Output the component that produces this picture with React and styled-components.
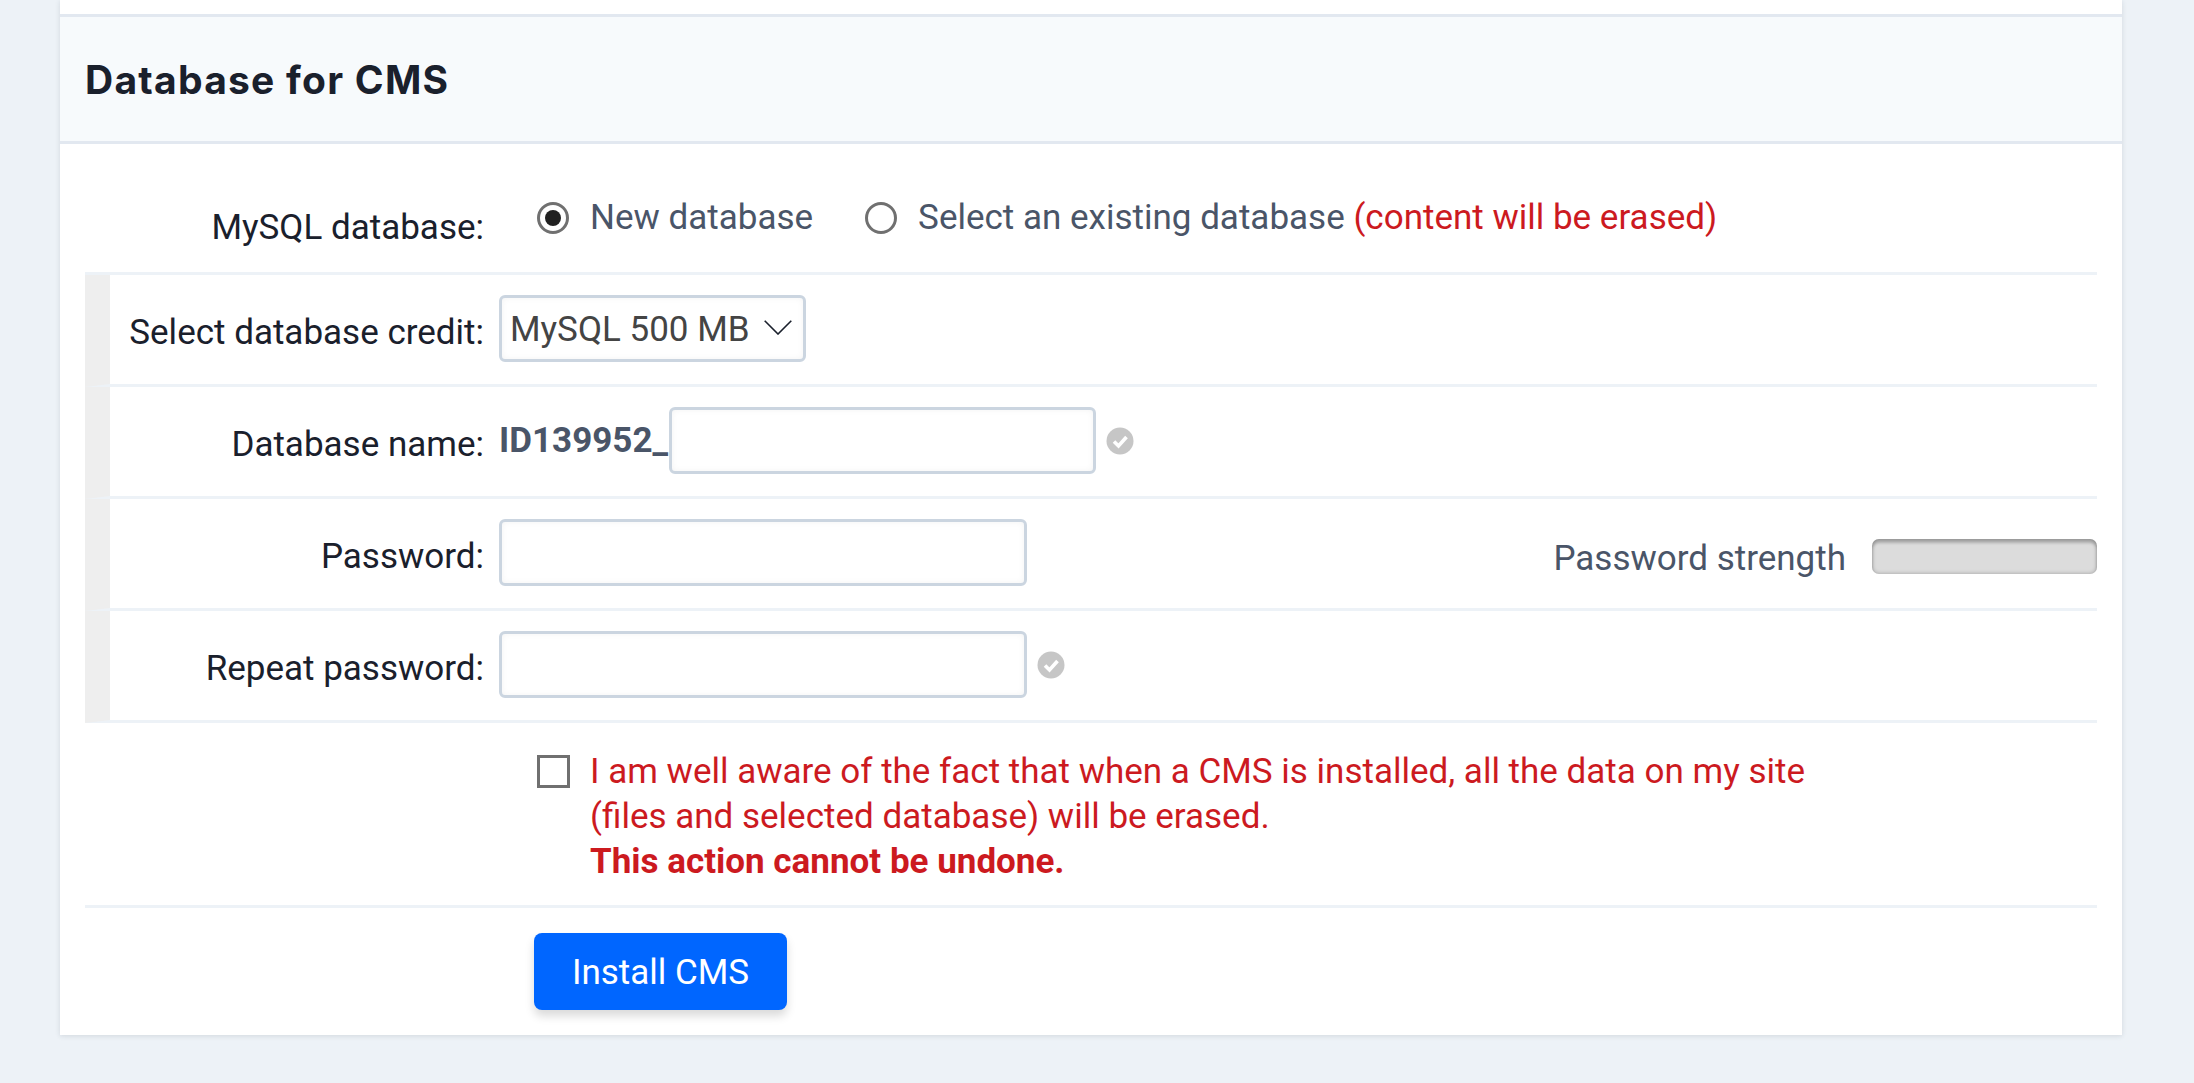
import React from "react"
import styled, { createGlobalStyle } from "styled-components"

const GlobalStyle = createGlobalStyle`
  html, body {
    margin: 0;
    padding: 0;
    height: 100%;
    overflow: hidden;
    background: #edf2f7;
    font-family: Roboto, "Liberation Sans", sans-serif;
  }
  * {
    box-sizing: border-box;
  }
`

const CheckIcon = () => (
  <CheckMark viewBox="0 0 28 28">
    <circle cx="14" cy="14" r="13.5" fill="#c6c6c6" />
    <path d="M8 14.5 L12.5 19 L20.5 10" fill="none" stroke="#fff" strokeWidth="3.6" />
  </CheckMark>
)

const App = () => {
  return (
    <>
      <GlobalStyle />
      <Card>
        <Header>
          <Title>Database for CMS</Title>
        </Header>
        <Row $first>
          <Label $top={10}>MySQL database:</Label>
          <Options>
            <Option>
              <Radio type="radio" name="db" defaultChecked />
              New database
            </Option>
            <Option>
              <Radio type="radio" name="db" />
              <span>
                Select an existing database <Danger>(content will be erased)</Danger>
              </span>
            </Option>
          </Options>
        </Row>
        <Row $nested>
          <Label>Select database credit:</Label>
          <SelectWrap>
            <Select defaultValue="500">
              <option value="500">MySQL 500 MB</option>
            </Select>
            <Chevron viewBox="0 0 28 15">
              <path d="M0.7 0.7 L14 14 L27.3 0.7" fill="none" stroke="#1a202c" strokeWidth="1.6" />
            </Chevron>
          </SelectWrap>
        </Row>
        <Row $nested>
          <Label>Database name:</Label>
          <Prefix>ID139952_</Prefix>
          <TextInput $width={427} type="text" />
          <CheckIcon />
        </Row>
        <Row $nested>
          <Label>Password:</Label>
          <TextInput $width={528} type="password" />
          <Strength>
            <StrengthLabel>Password strength</StrengthLabel>
            <StrengthBar />
          </Strength>
        </Row>
        <Row $nested>
          <Label>Repeat password:</Label>
          <TextInput $width={528} type="password" />
          <CheckIcon />
        </Row>
        <AgreeRow>
          <Checkbox type="checkbox" />
          <AgreeText>
            I am well aware of the fact that when a CMS is installed, all the data on my site
            <br />
            (files and selected database) will be erased.
            <br />
            <strong>This action cannot be undone.</strong>
          </AgreeText>
        </AgreeRow>
        <ButtonRow>
          <InstallButton type="button">Install CMS</InstallButton>
        </ButtonRow>
      </Card>
    </>
  )
}

export default App

const Card = styled.div`
  margin: 0 72px 0 60px;
  padding-top: 14px;
  background: #fff;
  box-shadow: 0 1px 5px rgba(45, 55, 72, 0.14);
`

const Header = styled.div`
  display: flex;
  align-items: center;
  height: 130px;
  padding-left: 25px;
  background: #f7fafc;
  border-top: 3px solid #e2e8f0;
  border-bottom: 3px solid #e2e8f0;
`

const Title = styled.h2`
  margin: 0;
  font-family: Inter, "Liberation Sans", sans-serif;
  font-size: 39px;
  font-weight: 700;
  letter-spacing: 1.25px;
  color: #1a202c;
`

const Row = styled.div`
  display: flex;
  align-items: flex-start;
  margin: 0 25px;
  height: ${(p) => (p.$first ? "131px" : "112px")};
  padding-top: ${(p) => (p.$first ? "51px" : "20px")};
  padding-left: ${(p) => (p.$nested ? "0" : "25px")};
  border-left: ${(p) => (p.$nested ? "25px solid #eeeeee" : "0")};
  border-bottom: 3px solid #edf2f7;
`

const Label = styled.label`
  flex: none;
  width: 374px;
  margin-right: 15px;
  margin-top: ${(p) => p.$top ?? 15}px;
  text-align: right;
  font-size: 35px;
  line-height: 45px;
  color: #1a202c;
  white-space: nowrap;
`

const Options = styled.div`
  display: flex;
  gap: 52px;
  padding-left: 38px;
`

const Option = styled.label`
  display: flex;
  align-items: flex-start;
  font-size: 35px;
  line-height: 45px;
  color: #4a5568;
  white-space: nowrap;
`

const Radio = styled.input`
  appearance: none;
  flex: none;
  display: flex;
  align-items: center;
  justify-content: center;
  width: 32px;
  height: 32px;
  margin: 7px 21px 0 0;
  border: 3px solid #707070;
  border-radius: 50%;
  background: #fff;

  &:checked::after {
    content: "";
    width: 16px;
    height: 16px;
    border-radius: 50%;
    background: #212121;
  }
`

const Danger = styled.span`
  color: #cc1a1f;
`

const SelectWrap = styled.div`
  position: relative;
  width: 307px;
  height: 67px;
`

const Select = styled.select`
  appearance: none;
  width: 100%;
  height: 100%;
  padding: 2px 0 0 8px;
  font-family: Roboto, "Liberation Sans", sans-serif;
  font-size: 35px;
  color: #444;
  background: #fff;
  border: 3px solid #cbd5e0;
  border-radius: 6px;
  box-shadow: inset 0 0 6px rgba(0, 0, 0, 0.05);
`

const Chevron = styled.svg`
  position: absolute;
  top: 25px;
  left: 265px;
  width: 28px;
  height: 15px;
  pointer-events: none;
`

const Prefix = styled.span`
  flex: none;
  margin-top: 11px;
  width: 170px;
  font-size: 35px;
  font-weight: 700;
  line-height: 45px;
  color: #4a5568;
  white-space: nowrap;
`

const TextInput = styled.input`
  flex: none;
  width: ${(p) => p.$width}px;
  height: 67px;
  padding: 0 12px;
  font-size: 35px;
  background: #fff;
  border: 3px solid #cbd5e0;
  border-radius: 6px;
  box-shadow: inset 0 0 6px rgba(0, 0, 0, 0.05);
  outline: none;
`

const CheckMark = styled.svg`
  flex: none;
  width: 28px;
  height: 28px;
  margin: 20px 0 0 10px;
  filter: blur(0.6px);
`

const Strength = styled.div`
  display: flex;
  align-items: flex-start;
  gap: 26px;
  margin-left: auto;
`

const StrengthLabel = styled.span`
  margin-top: 17px;
  font-size: 35px;
  line-height: 45px;
  color: #4a5568;
  white-space: nowrap;
`

const StrengthBar = styled.div`
  width: 225px;
  height: 35px;
  margin-top: 20px;
  background: #dcdcdc;
  border-radius: 7px;
  box-shadow: inset 0 4px 3px rgba(0, 0, 0, 0.2), inset 0 0 4px rgba(0, 0, 0, 0.28);
`

const AgreeRow = styled.div`
  display: flex;
  align-items: flex-start;
  height: 185px;
  margin: 0 25px;
  padding: 26px 0 0 452px;
  border-bottom: 3px solid #edf2f7;
`

const Checkbox = styled.input`
  appearance: none;
  flex: none;
  width: 33px;
  height: 33px;
  margin: 6px 22px 0 0;
  border: 3px solid #707070;
  background: #fff;
`

const AgreeText = styled.div`
  font-size: 35px;
  line-height: 45px;
  margin-left: -2px;
  color: #cc1a1f;
  white-space: nowrap;

  strong {
    font-weight: 700;
  }
`

const ButtonRow = styled.div`
  height: 127px;
  padding: 25px 0 0 474px;
`

const InstallButton = styled.button`
  display: block;
  width: 253px;
  height: 77px;
  padding: 2px 0 0;
  font-family: Roboto, "Liberation Sans", sans-serif;
  font-size: 35px;
  color: #fff;
  background: #0066ff;
  border: 0;
  border-radius: 8px;
  box-shadow: 0 6px 10px rgba(0, 0, 0, 0.15);
`
